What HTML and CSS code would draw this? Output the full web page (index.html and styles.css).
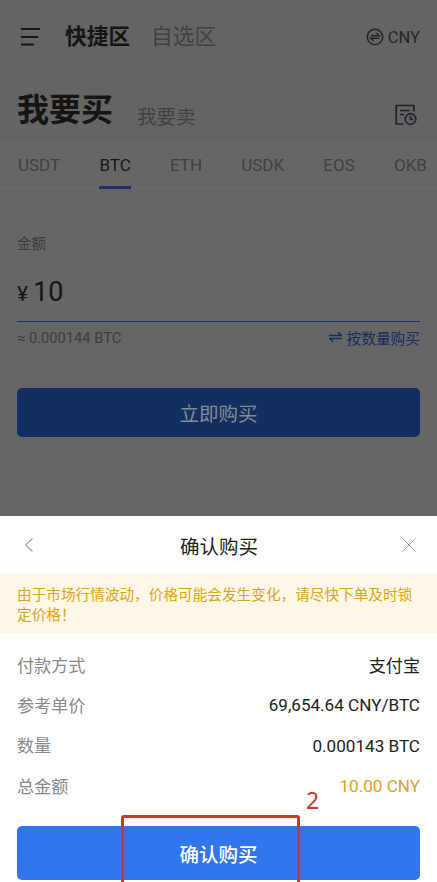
FILE: index.html
```html
<!DOCTYPE html>
<html lang="zh-CN">
<head>
<meta charset="utf-8">
<title>确认购买</title>
<link rel="stylesheet" href="styles.css">
</head>
<body>
<main class="page">
  <header class="top">
    <nav class="nav">
      <svg class="menu" width="22" height="20" viewBox="0 0 22 20"><path d="M1 2h19M1 10h17M1 17.500h13" /></svg>
      <span class="zone zone-active">快捷区</span>
      <span class="zone">自选区</span>
      <span class="currency">
        <svg width="18" height="18" viewBox="0 0 18 18"><circle cx="9" cy="9" r="7.700"/><path d="M4.800 7.700h8.400L10.400 5M13.200 10.300H4.800L7.600 13"/></svg>
        CNY
      </span>
    </nav>
    <div class="modes">
      <h1>我要买</h1>
      <span class="sell">我要卖</span>
      <svg class="orders" width="24" height="24" viewBox="0 0 24 24"><path d="M9.500 21H2.200V2.500h17.600v6M6 7.500h9.500M6 11.500h4"/><circle cx="16.500" cy="16" r="5.300"/><path d="M16.500 13v3.300H19"/></svg>
    </div>
  </header>
  <nav class="coins">
    <span>USDT</span><span class="coin-active">BTC</span><span>ETH</span><span>USDK</span><span>EOS</span><span>OKB</span>
  </nav>
  <section class="form">
    <div class="label">金额</div>
    <div class="amount"><span class="yen">¥</span>10</div>
    <div class="hint">
      <span>≈ 0.000144 BTC</span>
      <span class="switch"><svg width="13" height="10" viewBox="0 0 13 10"><path d="M0 3.500h12.500L9 .5M13 6.500H.5L4 9.500"/></svg>按数量购买</span>
    </div>
    <div class="button buy">立即购买</div>
  </section>
</main>
<section class="sheet">
  <header class="sheet-head">
    <svg width="14" height="18" viewBox="0 0 14 18"><path d="M10.500 2.500 3.500 9l7 6.500"/></svg>
    <h2>确认购买</h2>
    <svg class="close" width="14" height="14" viewBox="0 0 14 14"><path d="m.5.500 13 13m0-13-13 13"/></svg>
  </header>
  <p class="notice">由于市场行情波动，价格可能会发生变化，请尽快下单及时锁定价格！</p>
  <dl class="details">
    <div><dt>付款方式</dt><dd>支付宝</dd></div>
    <div><dt>参考单价</dt><dd>69,654.64 CNY/BTC</dd></div>
    <div><dt>数量</dt><dd>0.000143 BTC</dd></div>
    <div><dt>总金额</dt><dd class="total">10.00 CNY</dd></div>
  </dl>
  <div class="button confirm">确认购买<span class="mark"></span><span class="step">2</span></div>
</section>
</body>
</html>
```
FILE: styles.css
```css
* { box-sizing: border-box; }
body {
  margin: 0;
  width: 437px;
  height: 882px;
  overflow: hidden;
  font-family: Roboto, "Noto Sans CJK SC", sans-serif;
  color: #222;
}
svg { fill: none; stroke: currentColor; flex: none; }
h1, h2, p, dl, dd { margin: 0; }
.page { height: 516px; background: #666; color: #151515; }
.top { height: 140px; background: #646464; }
.nav { display: flex; align-items: center; height: 73px; padding: 0 17px 0 20px; }
.menu { stroke-width: 2; }
.zone { margin-left: 21px; font-size: 21.700px; line-height: 30px; color: #404040; }
.zone-active { margin-left: 23px; font-weight: 700; color: #151515; }
.currency { display: flex; align-items: center; gap: 4px; margin-left: auto; font-size: 16.500px; color: #252525; padding-top: 1px; }
.currency svg { stroke-width: 1.500; }
.modes { display: flex; align-items: baseline; height: 67px; padding: 14px 19px 0 17px; }
.modes h1 { font-size: 32px; line-height: 46px; font-weight: 700; }
.sell { position: relative; top: 3px; margin-left: 24px; font-size: 19.500px; color: #404040; }
.orders { align-self: flex-start; margin: 16px 0 0 auto; color: #20202c; stroke-width: 1.700; }
.coins { display: flex; height: 49px; padding-left: 18px; border-bottom: 1px solid #6c6c6c; font-size: 17px; line-height: 50px; color: #404040; white-space: nowrap; }
.coins span { height: 49px; margin-right: 39.200px; }
.coins .coin-active { border-bottom: 3px solid #202f68; color: #151515; }
.form { padding: 45px 17px 0; }
.label { font-size: 14.500px; line-height: 22px; color: #3c3c3c; }
.amount { display: flex; align-items: baseline; height: 66px; padding-top: 20px; border-bottom: 1px solid #1b2f60; font-size: 27px; line-height: 32px; }
.yen { margin-right: 5px; font-size: 21px; }
.hint { display: flex; justify-content: space-between; align-items: center; height: 32px; font-size: 14.700px; color: #3c3c3c; }
.switch { display: flex; align-items: center; gap: 5px; margin-top: -2px; color: #172d5e; }
.switch svg { stroke-width: 1.500; }
.button { display: flex; align-items: center; justify-content: center; border-radius: 5px; font-size: 19.500px; }
.buy { height: 49px; margin-top: 34px; background: #132f62; color: #858b95; }
.sheet { height: 366px; background: #fff; }
.sheet-head { display: flex; align-items: center; justify-content: space-between; height: 58px; padding: 0 21px 0 22px; color: #aaa; }
.sheet-head h2 { font-size: 19.500px; font-weight: 400; color: #222; }
.sheet-head svg { stroke-width: 1.300; }
.sheet-head .close { color: #999; stroke-width: 1; }
.notice { height: 59px; padding: 11px 17px 0; background: #fef6e6; font-size: 14.650px; line-height: 20px; color: #dba520; }
.details { padding: 12px 17px 0; font-size: 17.100px; }
.details div { display: flex; align-items: center; justify-content: space-between; height: 40.300px; }
.details dt { margin-top: -2px; color: #888; }
.details div:first-child dd { margin-top: -2px; }
.details .total { color: #e0a126; }
.confirm { position: relative; height: 54px; margin: 20px 17px 0; background: #3176ee; color: #fff; font-weight: 500; }
.mark { position: absolute; left: 104px; top: -11px; width: 179px; height: 76px; border: 3px solid #d1332f; border-radius: 3px; }
.step { position: absolute; left: 289px; top: -40px; font: 23px/28px "Noto Sans", sans-serif; color: #d1332f; }
```
